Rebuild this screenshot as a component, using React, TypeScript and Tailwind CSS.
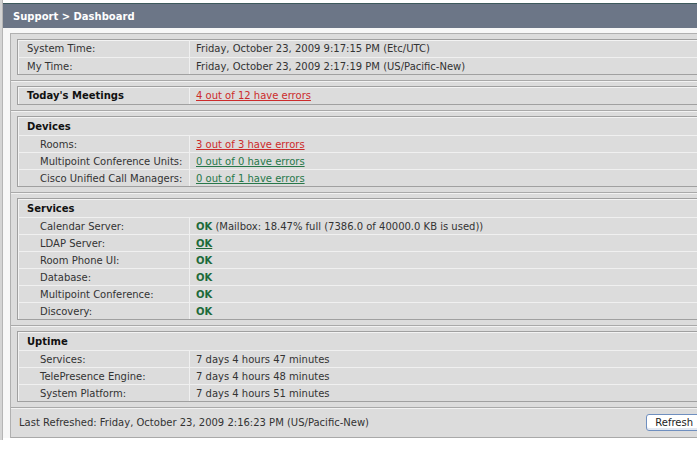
import React from 'react';

type Row = { label: string; value: React.ReactNode };

const font = { fontFamily: '"DejaVu Sans", Verdana, sans-serif' };

const RedLink = ({ children }: { children: React.ReactNode }) => (
  <a href="#" className="text-[#cc2b2b] underline">{children}</a>
);

const GreenLink = ({ children }: { children: React.ReactNode }) => (
  <a href="#" className="text-[#27784a] underline">{children}</a>
);

const Ok = ({ link }: { link?: boolean }) =>
  link ? (
    <a href="#" className="font-bold text-[#1d6a3a] underline">OK</a>
  ) : (
    <span className="font-bold text-[#1d6a3a]">OK</span>
  );

const DataRow = ({ label, value, indent, bold, first }: Row & { indent?: boolean; bold?: boolean; first?: boolean }) => (
  <div className={`flex h-[17px] items-center ${first ? '' : 'border-t border-[#f0f0f0]'}`}>
    <div className={`w-[172px] shrink-0 h-full flex items-center border-r border-[#f0f0f0] ${indent ? 'pl-[22px]' : 'pl-[9px]'} ${bold ? 'font-bold text-[#111]' : ''}`}>
      {label}
    </div>
    <div className="pl-[6px] whitespace-nowrap">{value}</div>
  </div>
);

const Section = ({ children }: { children: React.ReactNode }) => (
  <div className="px-[6px] py-[5px] border-b border-[#a9a9a9] shadow-[0_1px_0_#f2f2f2]">
    <div className="border border-[#a0a0a0] shadow-[inset_1px_1px_0_#f3f3f3]">{children}</div>
  </div>
);

const Group = ({ title, rows }: { title: string; rows: Row[] }) => (
  <Section>
    <div className="h-[18px] flex items-center pl-[9px] font-bold text-[#111]">{title}</div>
    {rows.map((r) => (
      <DataRow key={r.label} {...r} indent />
    ))}
  </Section>
);

export default function App() {
  return (
    <div className="w-[697px] h-[468px] overflow-hidden bg-white text-[10px] text-[#333]" style={font}>
      <div className="flex w-[720px]">
        <div className="w-[3px] h-[440px] bg-[#d4d4d4] border-r border-[#b5b5b5]" />
        <div className="flex-1">
          <div className="mt-[3px] h-[25px] bg-[#6c7687] border-t border-[#3e5a5c] flex items-center pl-[10px] text-[10px] font-bold text-white">
            Support &gt; Dashboard
          </div>
          <div className="pl-[7px] pt-[5px] bg-[#f7f7f7]">
            <div className="bg-[#dcdcdc] border-l border-t border-[#b0b0b0]">
              <Section>
                <DataRow first label="System Time:" value="Friday, October 23, 2009 9:17:15 PM (Etc/UTC)" />
                <DataRow label="My Time:" value="Friday, October 23, 2009 2:17:19 PM (US/Pacific-New)" />
              </Section>
              <Section>
                <DataRow first bold label="Today's Meetings" value={<RedLink>4 out of 12 have errors</RedLink>} />
              </Section>
              <Group
                title="Devices"
                rows={[
                  { label: 'Rooms:', value: <RedLink>3 out of 3 have errors</RedLink> },
                  { label: 'Multipoint Conference Units:', value: <GreenLink>0 out of 0 have errors</GreenLink> },
                  { label: 'Cisco Unified Call Managers:', value: <GreenLink>0 out of 1 have errors</GreenLink> },
                ]}
              />
              <Group
                title="Services"
                rows={[
                  {
                    label: 'Calendar Server:',
                    value: (
                      <>
                        <Ok /> (Mailbox: 18.47% full (7386.0 of 40000.0 KB is used))
                      </>
                    ),
                  },
                  { label: 'LDAP Server:', value: <Ok link /> },
                  { label: 'Room Phone UI:', value: <Ok /> },
                  { label: 'Database:', value: <Ok /> },
                  { label: 'Multipoint Conference:', value: <Ok /> },
                  { label: 'Discovery:', value: <Ok /> },
                ]}
              />
              <Group
                title="Uptime"
                rows={[
                  { label: 'Services:', value: '7 days 4 hours 47 minutes' },
                  { label: 'TelePresence Engine:', value: '7 days 4 hours 48 minutes' },
                  { label: 'System Platform:', value: '7 days 4 hours 51 minutes' },
                ]}
              />
              <div className="h-[30px] flex items-center justify-between pl-[8px] border-b border-[#a9a9a9]">
                <span>Last Refreshed: Friday, October 23, 2009 2:16:23 PM (US/Pacific-New)</span>
                <button className="mr-[18px] h-[17px] px-[8px] bg-white border border-[#6f8fbf] rounded-[3px] text-[10px] text-[#222] shadow-[inset_0_-2px_0_#e2e8f2]">
                  Refresh
                </button>
              </div>
            </div>
          </div>
        </div>
      </div>
    </div>
  );
}
